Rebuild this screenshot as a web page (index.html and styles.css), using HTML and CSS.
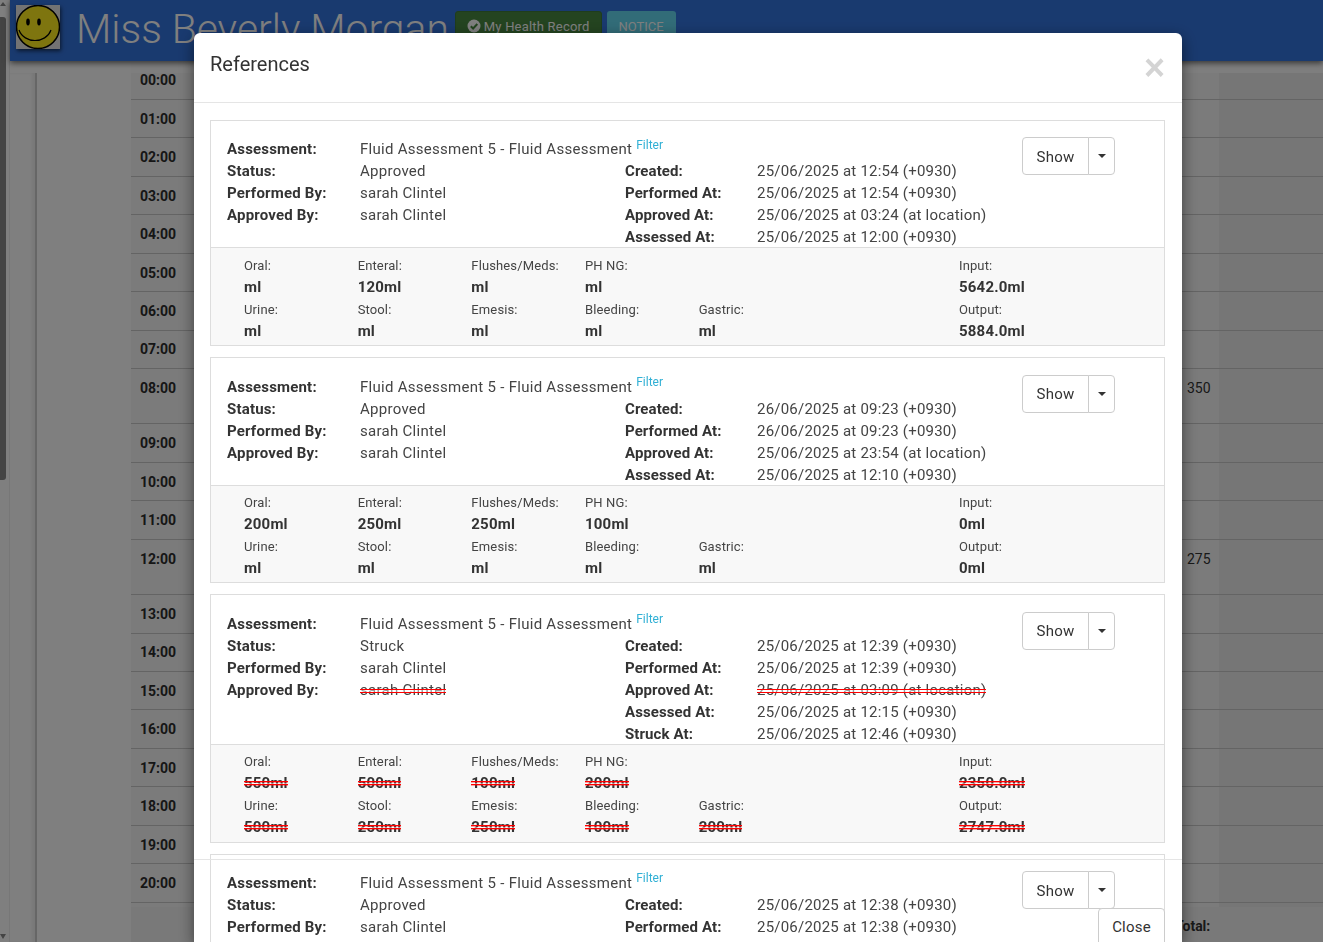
FILE: index.html
```html
<!DOCTYPE html>
<html lang="en">
<head>
<meta charset="utf-8">
<title>References</title>
<link rel="stylesheet" href="styles.css">
</head>
<body>
<div class="page">
  <div class="scrollbar"><i class="arrow-up"></i><div class="thumb"></div><i class="arrow-down"></i></div>
  <div class="main">
    <header class="topbar">
      <svg class="avatar" viewBox="0 0 44 44"><rect width="44" height="44" fill="#e6e6e6"/><circle cx="22" cy="22" r="21.5" fill="#fdeb1e" stroke="#000" stroke-width="1.5"/><ellipse cx="12" cy="17" rx="1.8" ry="3.4" fill="#000"/><ellipse cx="23" cy="17" rx="1.8" ry="3.4" fill="#000"/><path d="M3 25 C8 39 30 39 35 25" fill="none" stroke="#000" stroke-width="1.2"/></svg>
      <h1 class="patient">Miss Beverly Morgan</h1>
      <span class="badge badge-green"><svg class="check" viewBox="0 0 14 14"><circle cx="7" cy="7" r="6.5" fill="#fff"/><path d="M3.8 7.2 6.1 9.5 10.3 5" fill="none" stroke="#488840" stroke-width="2"/></svg>My Health Record</span>
      <span class="badge badge-teal">NOTICE</span>
    </header>
    <div class="content">
      <div class="side"></div>
      <div class="chart">
        <div class="row"><b>00:00</b></div>
        <div class="row"><b>01:00</b></div>
        <div class="row"><b>02:00</b></div>
        <div class="row"><b>03:00</b></div>
        <div class="row"><b>04:00</b></div>
        <div class="row"><b>05:00</b></div>
        <div class="row"><b>06:00</b></div>
        <div class="row"><b>07:00</b></div>
        <div class="row tall"><b>08:00</b><span>350</span></div>
        <div class="row"><b>09:00</b></div>
        <div class="row"><b>10:00</b></div>
        <div class="row"><b>11:00</b></div>
        <div class="row tall"><b>12:00</b><span>275</span></div>
        <div class="row"><b>13:00</b></div>
        <div class="row"><b>14:00</b></div>
        <div class="row"><b>15:00</b></div>
        <div class="row"><b>16:00</b></div>
        <div class="row"><b>17:00</b></div>
        <div class="row"><b>18:00</b></div>
        <div class="row"><b>19:00</b></div>
        <div class="row"><b>20:00</b></div>
        <div class="row total"><b></b><strong>Total:</strong></div>
      </div>
    </div>
  </div>
</div>
<div class="backdrop"></div>
<section class="modal">
  <div class="modal-header">
    <h2 class="modal-title">References</h2>
    <button class="close">×</button>
  </div>
  <div class="modal-body">

    <article class="card">
      <div class="summary">
        <div class="info">
          <div class="kv"><b>Assessment:</b><span>Fluid Assessment 5 - Fluid Assessment <a class="filter">Filter</a></span></div>
          <div class="cols">
            <div class="col">
              <div class="kv"><b>Status:</b><span>Approved</span></div>
              <div class="kv"><b>Performed By:</b><span>sarah Clintel</span></div>
              <div class="kv"><b>Approved By:</b><span>sarah Clintel</span></div>
            </div>
            <div class="col">
              <div class="kv"><b>Created:</b><span>25/06/2025 at 12:54 (+0930)</span></div>
              <div class="kv"><b>Performed At:</b><span>25/06/2025 at 12:54 (+0930)</span></div>
              <div class="kv"><b>Approved At:</b><span>25/06/2025 at 03:24 (at location)</span></div>
              <div class="kv"><b>Assessed At:</b><span>25/06/2025 at 12:00 (+0930)</span></div>
            </div>
          </div>
        </div>
        <div class="btn-group"><button class="btn">Show</button><button class="btn caret-btn"><i class="caret"></i></button></div>
      </div>
      <div class="fluids">
        <div class="f"><label>Oral:</label><b>ml</b></div>
        <div class="f"><label>Enteral:</label><b>120ml</b></div>
        <div class="f"><label>Flushes/Meds:</label><b>ml</b></div>
        <div class="f"><label>PH NG:</label><b>ml</b></div>
        <div class="f"></div><div class="f"></div>
        <div class="f"><label>Input:</label><b>5642.0ml</b></div>
        <div class="f"><label>Urine:</label><b>ml</b></div>
        <div class="f"><label>Stool:</label><b>ml</b></div>
        <div class="f"><label>Emesis:</label><b>ml</b></div>
        <div class="f"><label>Bleeding:</label><b>ml</b></div>
        <div class="f"><label>Gastric:</label><b>ml</b></div>
        <div class="f"></div>
        <div class="f"><label>Output:</label><b>5884.0ml</b></div>
      </div>
    </article>

    <article class="card">
      <div class="summary">
        <div class="info">
          <div class="kv"><b>Assessment:</b><span>Fluid Assessment 5 - Fluid Assessment <a class="filter">Filter</a></span></div>
          <div class="cols">
            <div class="col">
              <div class="kv"><b>Status:</b><span>Approved</span></div>
              <div class="kv"><b>Performed By:</b><span>sarah Clintel</span></div>
              <div class="kv"><b>Approved By:</b><span>sarah Clintel</span></div>
            </div>
            <div class="col">
              <div class="kv"><b>Created:</b><span>26/06/2025 at 09:23 (+0930)</span></div>
              <div class="kv"><b>Performed At:</b><span>26/06/2025 at 09:23 (+0930)</span></div>
              <div class="kv"><b>Approved At:</b><span>25/06/2025 at 23:54 (at location)</span></div>
              <div class="kv"><b>Assessed At:</b><span>25/06/2025 at 12:10 (+0930)</span></div>
            </div>
          </div>
        </div>
        <div class="btn-group"><button class="btn">Show</button><button class="btn caret-btn"><i class="caret"></i></button></div>
      </div>
      <div class="fluids">
        <div class="f"><label>Oral:</label><b>200ml</b></div>
        <div class="f"><label>Enteral:</label><b>250ml</b></div>
        <div class="f"><label>Flushes/Meds:</label><b>250ml</b></div>
        <div class="f"><label>PH NG:</label><b>100ml</b></div>
        <div class="f"></div><div class="f"></div>
        <div class="f"><label>Input:</label><b>0ml</b></div>
        <div class="f"><label>Urine:</label><b>ml</b></div>
        <div class="f"><label>Stool:</label><b>ml</b></div>
        <div class="f"><label>Emesis:</label><b>ml</b></div>
        <div class="f"><label>Bleeding:</label><b>ml</b></div>
        <div class="f"><label>Gastric:</label><b>ml</b></div>
        <div class="f"></div>
        <div class="f"><label>Output:</label><b>0ml</b></div>
      </div>
    </article>

    <article class="card">
      <div class="summary">
        <div class="info">
          <div class="kv"><b>Assessment:</b><span>Fluid Assessment 5 - Fluid Assessment <a class="filter">Filter</a></span></div>
          <div class="cols">
            <div class="col">
              <div class="kv"><b>Status:</b><span>Struck</span></div>
              <div class="kv"><b>Performed By:</b><span>sarah Clintel</span></div>
              <div class="kv"><b>Approved By:</b><span class="st">sarah Clintel</span></div>
            </div>
            <div class="col">
              <div class="kv"><b>Created:</b><span>25/06/2025 at 12:39 (+0930)</span></div>
              <div class="kv"><b>Performed At:</b><span>25/06/2025 at 12:39 (+0930)</span></div>
              <div class="kv"><b>Approved At:</b><span class="st">25/06/2025 at 03:09 (at location)</span></div>
              <div class="kv"><b>Assessed At:</b><span>25/06/2025 at 12:15 (+0930)</span></div>
              <div class="kv"><b>Struck At:</b><span>25/06/2025 at 12:46 (+0930)</span></div>
            </div>
          </div>
        </div>
        <div class="btn-group"><button class="btn">Show</button><button class="btn caret-btn"><i class="caret"></i></button></div>
      </div>
      <div class="fluids">
        <div class="f"><label>Oral:</label><b class="st">550ml</b></div>
        <div class="f"><label>Enteral:</label><b class="st">500ml</b></div>
        <div class="f"><label>Flushes/Meds:</label><b class="st">100ml</b></div>
        <div class="f"><label>PH NG:</label><b class="st">200ml</b></div>
        <div class="f"></div><div class="f"></div>
        <div class="f"><label>Input:</label><b class="st">2350.0ml</b></div>
        <div class="f"><label>Urine:</label><b class="st">500ml</b></div>
        <div class="f"><label>Stool:</label><b class="st">250ml</b></div>
        <div class="f"><label>Emesis:</label><b class="st">250ml</b></div>
        <div class="f"><label>Bleeding:</label><b class="st">100ml</b></div>
        <div class="f"><label>Gastric:</label><b class="st">200ml</b></div>
        <div class="f"></div>
        <div class="f"><label>Output:</label><b class="st">2747.0ml</b></div>
      </div>
    </article>

    <article class="card">
      <div class="summary">
        <div class="info">
          <div class="kv"><b>Assessment:</b><span>Fluid Assessment 5 - Fluid Assessment <a class="filter">Filter</a></span></div>
          <div class="cols">
            <div class="col">
              <div class="kv"><b>Status:</b><span>Approved</span></div>
              <div class="kv"><b>Performed By:</b><span>sarah Clintel</span></div>
            </div>
            <div class="col">
              <div class="kv"><b>Created:</b><span>25/06/2025 at 12:38 (+0930)</span></div>
              <div class="kv"><b>Performed At:</b><span>25/06/2025 at 12:38 (+0930)</span></div>
            </div>
          </div>
        </div>
        <div class="btn-group"><button class="btn">Show</button><button class="btn caret-btn"><i class="caret"></i></button></div>
      </div>
    </article>

  </div>
  <div class="modal-footer"><button class="btn btn-close">Close</button></div>
</section>
</body>
</html>
```
FILE: styles.css
```css
* { box-sizing: border-box; }
html, body { margin: 0; height: 100%; overflow: hidden; }
body { font-family: Roboto, "Liberation Sans", sans-serif; font-size: 14px; color: #333; background: #fff; }

.page { display: flex; height: 942px; overflow: hidden; }

.scrollbar { width: 10px; flex: none; display: flex; flex-direction: column; border-right: 1px solid #eee; padding-top: 2px; }
.arrow-up { width: 0; height: 0; border: 3px solid transparent; border-top: 0; border-bottom: 4px solid #888; }
.thumb { width: 6px; height: 463px; margin-top: 11px; background: #888; border-radius: 0 3px 3px 0; }
.arrow-down { margin-top: auto; margin-bottom: 3px; width: 0; height: 0; border: 3px solid transparent; border-bottom: 0; border-top: 5px solid #888; }

.main { flex: 1; display: flex; flex-direction: column; min-width: 0; }

.topbar { height: 61px; flex: none; display: flex; align-items: flex-start; background: #3374de; box-shadow: 0 2px 6px rgba(0,0,0,.6); position: relative; padding: 5px 0 0 6px; }
.avatar { width: 44px; height: 44px; flex: none; box-shadow: 1px 2px 4px rgba(0,0,0,.6); }
.patient { margin: 0 0 0 16px; font-size: 40.8px; font-weight: 300; line-height: 48px; color: #fff; white-space: nowrap; }
.badge { display: flex; align-items: center; height: 30px; margin: 6px 0 0 6px; padding: 0 11px; border-radius: 3px 3px 0 0; font-size: 13px; letter-spacing: .2px; color: #fff; white-space: nowrap; }
.badge-green { background: #488840; border: 1px solid #3f7a38; }
.badge-teal { background: #64d8f0; margin-left: 5px; padding: 0 12px; letter-spacing: 0; }
.check { width: 14px; height: 14px; margin-right: 3px; }

.content { flex: 1; display: flex; min-height: 0; }
.side { width: 27px; flex: none; margin-top: 12px; background: #fefefe; border-right: 2px solid #ccc; box-shadow: inset -3px 0 3px rgba(0,0,0,.06); }
.chart { margin-left: 94px; padding-top: .55px; flex: 1; display: flex; flex-direction: column; background: linear-gradient(#fdfdfd, #fdfdfd) top / 100% 12px no-repeat, linear-gradient(to right, #f7f7f7 1088px, #ececec 1088px); }
.row { height: 38.45px; flex: none; border-bottom: 1px solid #c9c9c9; display: grid; grid-template-columns: 1047px 1fr; padding: 8.85px 0 0 9px; line-height: 20px; }
.row.tall { height: 55.4px; }
.row b { font-weight: 700; font-size: 14px; color: #2c2c2c; }
.row span { font-size: 14px; color: #333; }
.row.total { border-bottom: 0; padding-top: 9px; background: #f3f3f3; margin-top: 4px; height: 40px; }
.row.total strong { margin-left: -12px; font-weight: 700; }

.backdrop { position: fixed; inset: 0; background: rgba(0,0,0,.5); }

.modal { position: fixed; left: 194px; top: 33px; width: 988px; bottom: 0; background: #fff; border-radius: 6px 6px 0 0; box-shadow: 0 5px 15px rgba(0,0,0,.5); overflow: hidden; display: flex; flex-direction: column; }
.modal-header { flex: none; height: 70px; display: flex; justify-content: space-between; align-items: flex-start; padding: 15px 17px 15px 16px; border-bottom: 1px solid #e5e5e5; }
.modal-title { margin: 0; font-size: 20px; font-weight: 400; line-height: 32px; color: #333; }
.close { border: 0; background: none; padding: 0; margin: 3px 0 0; font-family: "Liberation Sans", sans-serif; font-size: 36px; font-weight: 700; line-height: 34px; color: #d4d4d4; }
.modal-body { flex: 1; min-height: 0; overflow: hidden; padding: 17px 17px 17px 16px; }

.card { border: 1px solid #ddd; margin-bottom: 11px; }
.card:nth-child(4) { min-height: 226px; }
.summary { display: flex; padding: 17px 49px 0 16px; }
.card:first-child .summary, .card:nth-child(4) .summary { padding-top: 16px; }
.info { width: 795px; flex: none; font-size: 15px; line-height: 22px; margin: 1px 0 -1px; }
.kv { display: flex; height: 22px; white-space: nowrap; }
.kv b { width: 133px; flex: none; font-weight: 700; color: #333; letter-spacing: .18px; }
.kv span { color: #444; letter-spacing: .28px; }
.cols { display: flex; }
.col { width: 398px; flex: none; }
.col + .col .kv b { width: 132px; letter-spacing: .1px; }
.col + .col .kv span { letter-spacing: .22px; }
.filter { position: relative; top: -6px; font-size: 12px; letter-spacing: 0; color: #31b0d5; }
.card:first-child .filter { top: -5px; }

.st { position: relative; display: inline-block; }
.st::after { content: ""; position: absolute; left: 0; right: 0; top: 10px; height: 2px; border-top: 1px solid #f00; border-bottom: 1px solid #f00; background: rgba(255,255,255,.45); }
.f .st::after { top: 9px; height: 5px; border: 0; background: linear-gradient(#f00 0 1px, rgba(255,0,0,.35) 1px 2px, rgba(255,255,255,.5) 2px 3px, #f00 3px 4px, rgba(255,0,0,.35) 4px 5px); }

.btn-group { display: flex; height: 38px; flex: none; }
.btn { background: #fff; border: 1px solid #ccc; border-radius: 4px; font-family: inherit; font-size: 15px; color: #333; padding: 1px 13px 0; letter-spacing: .2px; }
.card:nth-child(2) .btn, .card:nth-child(3) .btn { padding-top: 0; padding-bottom: 1px; }
.btn-group .btn:first-child { width: 67px; border-radius: 4px 0 0 4px; }
.caret-btn { width: 27px; margin-left: -1px; padding: 0; border-radius: 0 4px 4px 0; display: flex; align-items: center; justify-content: center; }
.caret { width: 0; height: 0; border: 4px solid transparent; border-bottom: 0; border-top-color: #333; }

.fluids { background: #f8f8f8; border-top: 1px solid #ddd; padding: 6px 0 2px 33px; display: grid; grid-template-columns: repeat(5, 113.67px) 146.7px 1fr; }
.card:first-child .fluids { padding-top: 7px; }
.card:nth-child(3) .fluids { padding-bottom: 3px; }
.f { height: 44px; }
.f label { display: block; font-size: 13px; line-height: 22px; color: #444; letter-spacing: .13px; }
.f b { display: block; width: fit-content; margin-top: -1px; font-size: 15px; line-height: 22px; font-weight: 700; color: #333; letter-spacing: .2px; }

.modal-footer { position: absolute; left: 0; right: 0; top: 826px; height: 120px; border-top: 1px solid #e5e5e5; padding: 48px 17px 0 0; display: flex; justify-content: flex-end; align-items: flex-start; }
.btn-close { height: 38px; width: 67px; padding: 0; }
```
